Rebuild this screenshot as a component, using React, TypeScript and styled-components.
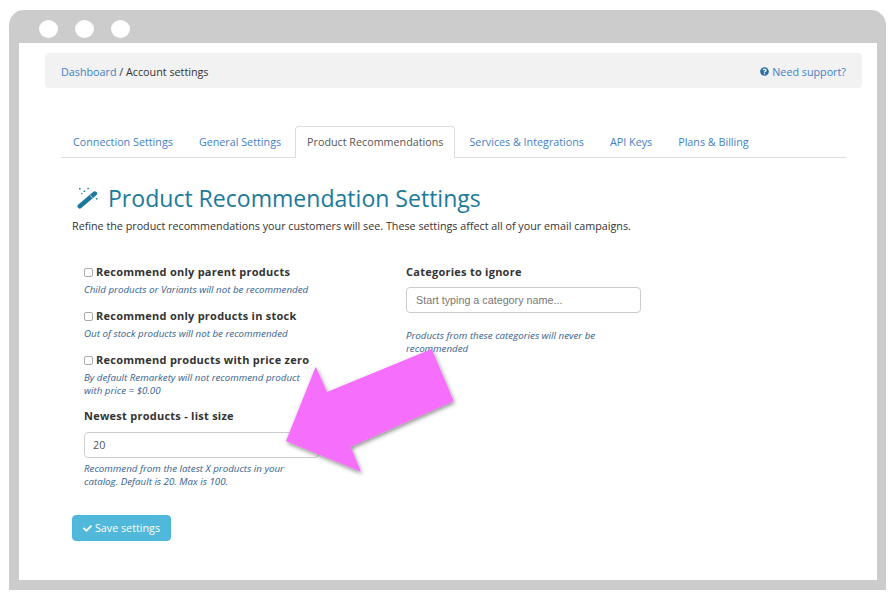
import { FaCheck, FaQuestionCircle } from "react-icons/fa";
import styled, { createGlobalStyle } from "styled-components";

const tabs = [
    "Connection Settings",
    "General Settings",
    "Product Recommendations",
    "Services & Integrations",
    "API Keys",
    "Plans & Billing",
];

const checks = [
    { label: "Recommend only parent products", hint: "Child products or Variants will not be recommended" },
    { label: "Recommend only products in stock", hint: "Out of stock products will not be recommended" },
    { label: "Recommend products with price zero", hint: "By default Remarkety will not recommend product with price = $0.00" },
];

const App = () => {
    return (
        <>
            <GlobalStyle />
            <Frame>
                <TitleBar>
                    <Dot />
                    <Dot />
                    <Dot />
                </TitleBar>
                <Page>
                    <Breadcrumb>
                        <div>
                            <LinkText>Dashboard</LinkText> / Account settings
                        </div>
                        <Support>
                            <FaQuestionCircle /> Need support?
                        </Support>
                    </Breadcrumb>
                    <Tabs>
                        {tabs.map((tab) => (
                            <Tab key={tab} $active={tab === "Product Recommendations"}>{tab}</Tab>
                        ))}
                    </Tabs>
                    <Heading>
                        <svg viewBox="0 0 22 22" width="22" height="22">
                            <path d="M3.8 19.2 L18.8 6.6" stroke="currentColor" strokeWidth="4.6" strokeLinecap="round" fill="none" />
                            <path d="M14.2 8.2 L16.6 11" stroke="#fff" strokeWidth="0.7" fill="none" />
                            <path
                                d="M3 1 h1.6 v1.6 h-1.6 z M7.6 3.4 h1.6 v1.6 h-1.6 z M11.4 0.8 h1.4 v1.4 h-1.4 z M5.2 6 h1.2 v1.2 h-1.2 z M20 11 h1.4 v1.4 h-1.4 z"
                                fill="currentColor"
                            />
                        </svg>
                        <span>Product Recommendation Settings</span>
                    </Heading>
                    <Intro>Refine the product recommendations your customers will see. These settings affect all of your email campaigns.</Intro>
                    <Columns>
                        <Column>
                            {checks.map((item) => (
                                <CheckGroup key={item.label}>
                                    <CheckLabel>
                                        <input type="checkbox" />
                                        {item.label}
                                    </CheckLabel>
                                    <Hint>{item.hint}</Hint>
                                </CheckGroup>
                            ))}
                            <FieldLabel>Newest products - list size</FieldLabel>
                            <TextInput defaultValue="20" />
                            <ListHint>Recommend from the latest X products in your catalog. Default is 20. Max is 100.</ListHint>
                        </Column>
                        <Column>
                            <CategoryLabel>Categories to ignore</CategoryLabel>
                            <CategoryInput placeholder="Start typing a category name..." />
                            <CategoryHint>Products from these categories will never be recommended</CategoryHint>
                        </Column>
                    </Columns>
                    <SaveButton>
                        <FaCheck /> Save settings
                    </SaveButton>
                </Page>
                <Arrow viewBox="0 0 200 160" width="200" height="160">
                    <defs>
                        <filter id="arrow-shadow" x="-10%" y="-10%" width="120%" height="120%">
                            <feDropShadow dx="1" dy="2" stdDeviation="2" floodColor="#000" floodOpacity="0.45" />
                        </filter>
                    </defs>
                    <polygon
                        points="6,102 35.7,27.7 47,53 151.7,10 173.7,62 70.7,107.7 81,132.7"
                        fill="#f66efc"
                        filter="url(#arrow-shadow)"
                    />
                </Arrow>
            </Frame>
        </>
    );
};

const GlobalStyle = createGlobalStyle`
    html, body {
        margin: 0;
        background: #fff;
    }
    body {
        font-family: "Open Sans", "Liberation Sans", sans-serif;
        font-size: 10.75px;
        color: #333;
    }
`;

const Frame = styled.div`
    position: relative;
    box-sizing: border-box;
    width: 877px;
    height: 580px;
    margin: 10px 0 0 9px;
    padding: 0 9px 10px 10px;
    background: #ccc;
    border-radius: 15px 15px 0 0;
    display: flex;
    flex-direction: column;
`;

const TitleBar = styled.div`
    height: 33px;
    flex: none;
    display: flex;
    align-items: flex-start;
    gap: 17px;
    padding: 10px 0 0 20px;
    box-sizing: border-box;
`;

const Dot = styled.span`
    width: 19px;
    height: 18px;
    border-radius: 50%;
    background: #fff;
`;

const Page = styled.div`
    flex: 1;
    background: #fff;
    padding: 10px 15px 0 26px;
    display: flex;
    flex-direction: column;
    align-items: flex-start;
`;

const Breadcrumb = styled.div`
    box-sizing: border-box;
    align-self: stretch;
    height: 35px;
    padding: 2px 16px 0;
    background: #f2f2f2;
    border-radius: 4px;
    display: flex;
    align-items: center;
    justify-content: space-between;
`;

const LinkText = styled.span`
    color: #3f7fc9;
`;

const Support = styled.div`
    color: #3f7fc9;
    display: flex;
    align-items: center;
    gap: 3px;

    svg {
        width: 9px;
        height: 9px;
        fill: #2a6ba8;
    }
`;

const Tabs = styled.div`
    box-sizing: border-box;
    align-self: stretch;
    margin: 38px 16px 0;
    height: 32px;
    border-bottom: 1px solid #ddd;
    display: flex;
    align-items: flex-start;
    gap: 2px;
`;

const Tab = styled.div<{ $active: boolean }>`
    box-sizing: border-box;
    height: ${({ $active }) => ($active ? "32px" : "31px")};
    padding: 0 11px ${({ $active }) => ($active ? "1px" : "0")};
    display: flex;
    align-items: center;
    border: 1px solid ${({ $active }) => ($active ? "#ddd" : "transparent")};
    border-bottom: 0;
    border-radius: 4px 4px 0 0;
    background: #fff;
    color: ${({ $active }) => ($active ? "#555" : "#3f7fc9")};
`;

const Heading = styled.h1`
    margin: 23px 0 0 31px;
    height: 34px;
    display: flex;
    align-items: center;
    gap: 10px;
    font-size: 23.05px;
    font-weight: 400;
    color: #1b7a9c;
`;

const Intro = styled.p`
    margin: 3px 0 0 27px;
    line-height: 17px;
`;

const Columns = styled.div`
    margin: 28px 0 0 39px;
    display: grid;
    grid-template-columns: 235px 235px;
    column-gap: 87px;
`;

const Column = styled.div`
    display: flex;
    flex-direction: column;
    align-items: flex-start;
`;

const CheckGroup = styled.div`
    margin-bottom: 11px;
`;

const CheckLabel = styled.label`
    display: flex;
    align-items: center;
    height: 17px;
    font-size: 11px;
    font-weight: 700;
    letter-spacing: 0.25px;
    color: #333;

    input {
        appearance: none;
        box-sizing: border-box;
        width: 9px;
        height: 9px;
        margin: 1px 3px 0 0;
        border: 1px solid #aaa;
        border-radius: 2px;
        background: #fff;
    }
`;

const Hint = styled.div`
    max-width: 226px;
    margin-top: 3px;
    font-size: 9.75px;
    line-height: 13px;
    font-style: italic;
    color: #34618f;
`;

const FieldLabel = styled.div`
    height: 17px;
    line-height: 15px;
    font-size: 11px;
    font-weight: 700;
    letter-spacing: 0.25px;
    color: #333;
`;

const CategoryLabel = styled(FieldLabel)`
    line-height: 17px;
`;

const TextInput = styled.input`
    box-sizing: border-box;
    width: 235px;
    height: 26px;
    margin-top: 7px;
    padding: 0 8px;
    border: 1px solid #ccc;
    border-radius: 4px;
    font-family: "Open Sans", sans-serif;
    font-size: 10.75px;
    color: #555;
`;

const CategoryInput = styled(TextInput)`
    font-family: "Liberation Sans", sans-serif;
    padding: 0 9px;

    &::placeholder {
        color: #777;
        opacity: 1;
    }
`;

const ListHint = styled(Hint)`
    margin-top: 4px;
`;

const CategoryHint = styled(Hint)`
    margin-top: 16px;
`;

const SaveButton = styled.button`
    box-sizing: border-box;
    width: 99px;
    height: 26px;
    margin: 27px 0 0 27px;
    border: 1px solid #46b8da;
    border-radius: 4px;
    background: #50b8da;
    color: #fff;
    font-family: "Open Sans", sans-serif;
    font-size: 10.75px;
    display: flex;
    align-items: center;
    justify-content: center;
    gap: 3px;

    svg {
        width: 9px;
        height: 9px;
    }
`;

const Arrow = styled.svg`
    position: absolute;
    left: 271px;
    top: 329px;
    overflow: visible;
`;

export default App;
